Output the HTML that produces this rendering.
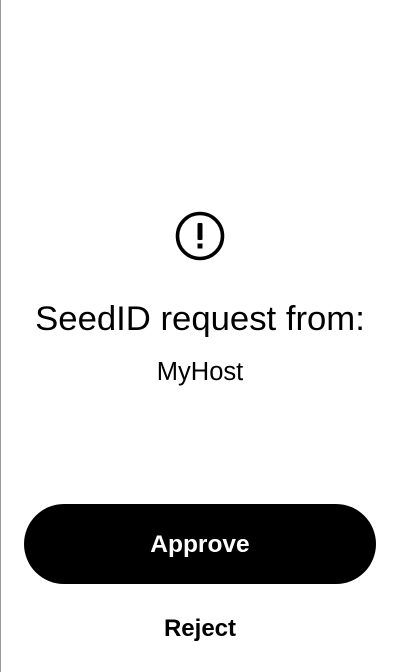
<!DOCTYPE html>
<html><head><style>
html,body{margin:0;padding:0;background:#fff;}
body{width:400px;height:672px;position:relative;overflow:hidden;font-family:"Liberation Sans",sans-serif;color:#000;}
.t{position:absolute;left:0;width:400px;text-align:center;white-space:nowrap;}
</style></head><body>
<div style="position:absolute;left:0;top:0;width:1px;height:672px;background:#999"></div>
<svg style="position:absolute;left:175px;top:211px" width="50" height="50" viewBox="0 0 50 50">
<circle cx="25" cy="25" r="22.5" fill="none" stroke="#000" stroke-width="3.6"/>
<rect x="22.5" y="12" width="5" height="17" rx="1" fill="#000"/>
<rect x="22.5" y="32.5" width="5" height="5" fill="#000"/>
</svg>
<div class="t" style="top:299px;font-size:34.7px;line-height:40px;">SeedID request from:</div>
<div class="t" style="top:357px;font-size:25.5px;line-height:30px;">MyHost</div>
<div style="position:absolute;left:24px;top:504px;width:352px;height:80px;border-radius:40px;background:#000;color:#fff;font-weight:bold;font-size:24.5px;line-height:82px;text-align:center;">Approve</div>
<div class="t" style="top:614px;font-size:24px;line-height:30px;font-weight:bold;">Reject</div>
</body></html>
